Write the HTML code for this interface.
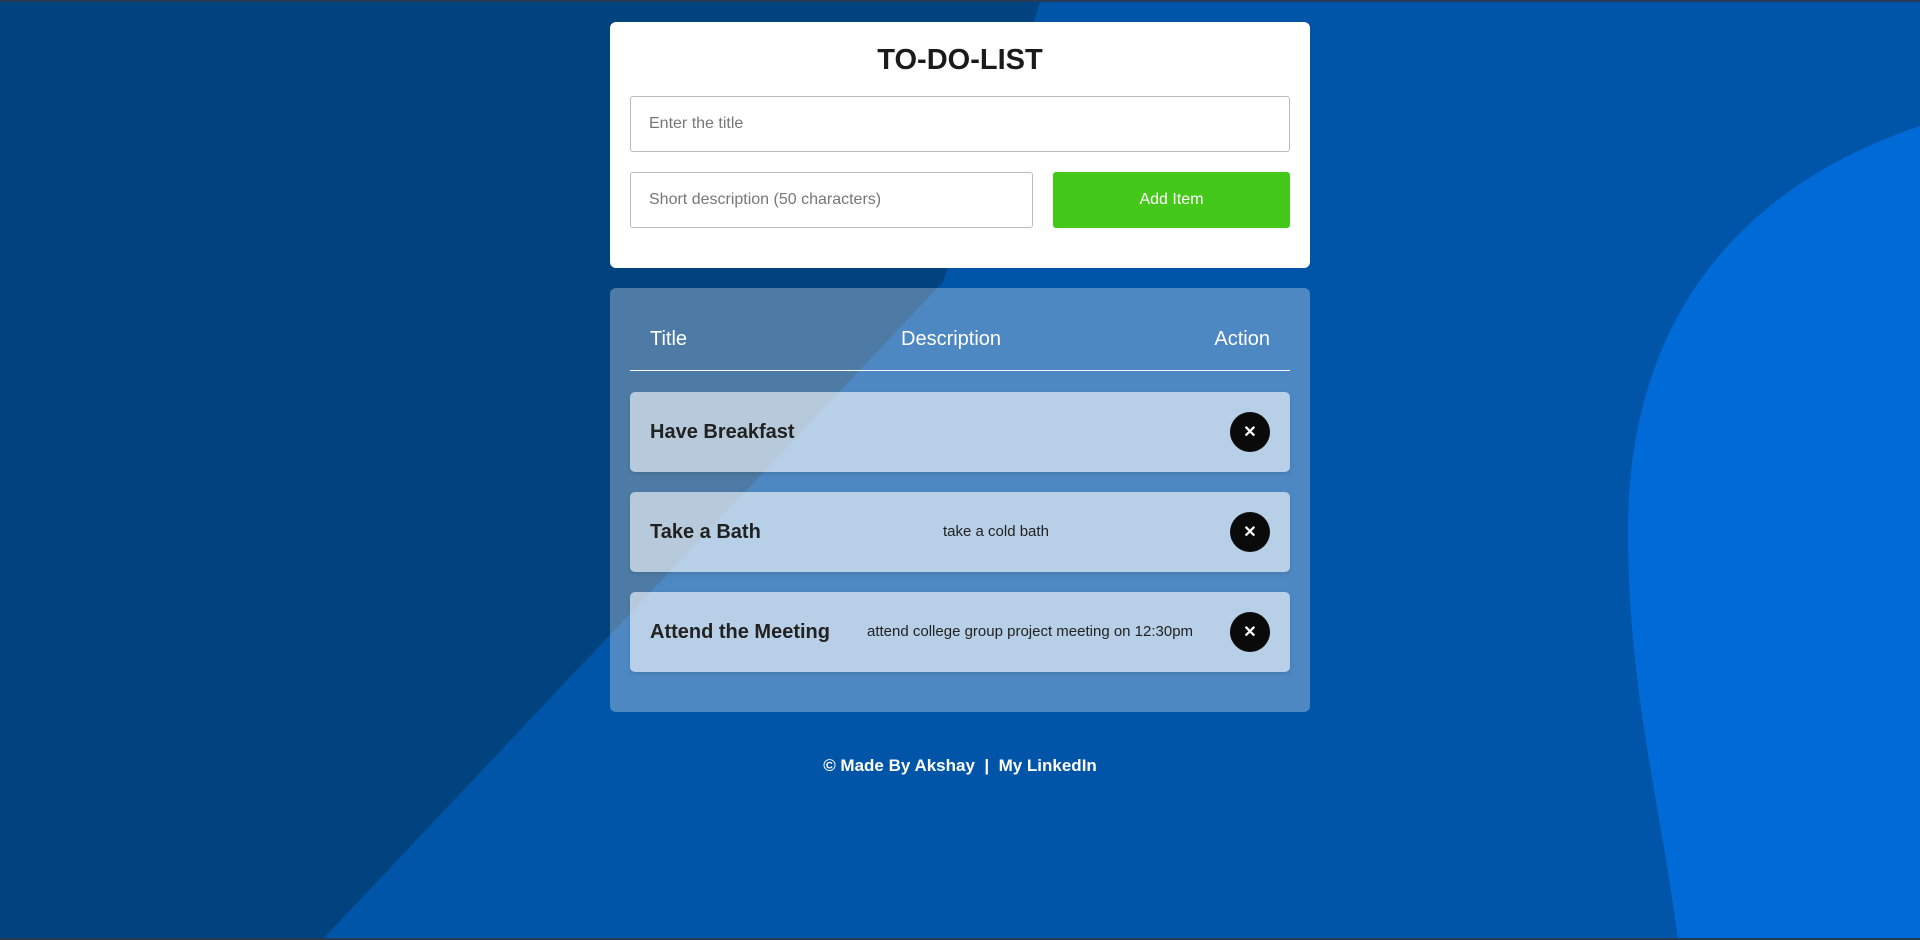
<!DOCTYPE html>
<html><head><meta charset="utf-8"><style>
*{box-sizing:border-box;margin:0;padding:0}
body{width:1920px;height:940px;overflow:hidden;background:#0055a8;font-family:"Liberation Sans",Arial,sans-serif;position:relative}
svg.bg{position:absolute;left:0;top:0}
.bt{position:absolute;left:0;width:1920px;height:2px;background:#253a55}
.card{position:absolute;left:610px;top:22px;width:700px;height:246px;background:#fff;border-radius:6px}
h1{position:absolute;top:22px;width:100%;text-align:center;font-size:29px;color:#1a1a1a;font-weight:bold}
.in{position:absolute;border:1px solid #bbb;border-radius:3px;color:#777;font-size:16px;padding-left:18px;display:flex;align-items:center;background:#fff}
.btn{position:absolute;left:443px;top:150px;width:237px;height:56px;background:#44c81a;border-radius:3px;color:#fff;font-size:16px;display:flex;align-items:center;justify-content:center}
.panel{position:absolute;left:610px;top:288px;width:700px;height:424px;background:rgba(255,255,255,.3);border-radius:6px}
.hd{position:absolute;top:40px;font-size:20px;color:#fff}
.line{position:absolute;left:20px;right:20px;top:82px;height:1px;background:#fff}
.item{position:absolute;left:20px;width:660px;height:80px;background:rgba(255,255,255,.6);border-radius:5px;box-shadow:0 2px 4px rgba(0,0,0,.1)}
.t{position:absolute;left:20px;top:0;line-height:80px;font-size:20px;font-weight:bold;color:#222}
.d{position:absolute;top:0;line-height:80px;font-size:15px;color:#222}
.x{position:absolute;left:600px;top:20px;width:40px;height:40px;border-radius:50%;background:#0a0a0a;color:#fff;font-weight:bold;font-size:16px;display:flex;align-items:center;justify-content:center}
.foot{position:absolute;top:756px;width:100%;text-align:center;color:#fff;font-size:17px;font-weight:bold}
</style></head><body>
<svg class="bg" width="1920" height="940"><polygon points="0,0 1041,0 943,282 322,940 0,940" fill="#00437f"/>
<path d="M1920,126 C1760,180 1625,300 1628,540 C1630,700 1660,800 1678,940 L1920,940 Z" fill="#006bd6"/></svg>
<div class="bt" style="top:0"></div><div class="bt" style="bottom:0"></div>
<div class="card"><h1>TO-DO-LIST</h1>
<div class="in" style="left:20px;top:74px;width:660px;height:56px">Enter the title</div>
<div class="in" style="left:20px;top:150px;width:403px;height:56px">Short description (50 characters)</div>
<div class="btn">Add Item</div></div>
<div class="panel">
<div class="hd" style="left:40px">Title</div><div class="hd" style="left:291px">Description</div><div class="hd" style="right:40px">Action</div>
<div class="line"></div>
<div class="item" style="top:104px"><div class="t">Have Breakfast</div><div class="x">✕</div></div>
<div class="item" style="top:204px"><div class="t">Take a Bath</div><div class="d" style="left:313px">take a cold bath</div><div class="x">✕</div></div>
<div class="item" style="top:304px"><div class="t">Attend the Meeting</div><div class="d" style="left:237px">attend college group project meeting on 12:30pm</div><div class="x">✕</div></div>
</div>
<div class="foot">© Made By Akshay &nbsp;| &nbsp;My LinkedIn</div>
</body></html>
